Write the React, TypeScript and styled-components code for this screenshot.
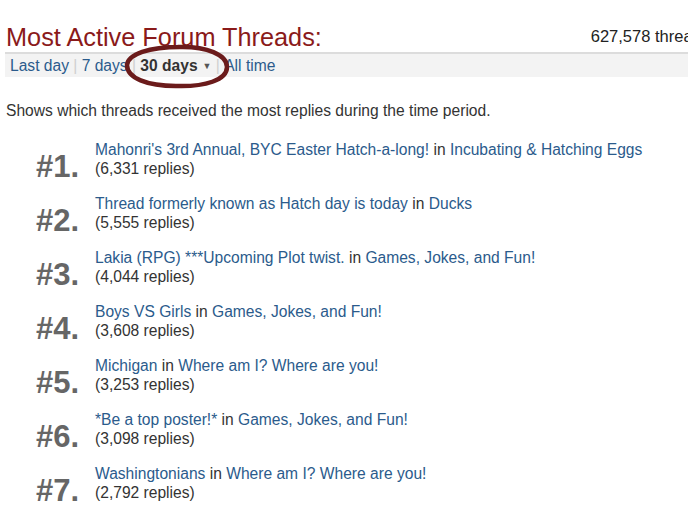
import React from "react";
import styled, { createGlobalStyle } from "styled-components";

const GlobalStyle = createGlobalStyle`
  html, body {
    margin: 0;
    padding: 0;
    background: #fff;
    overflow: hidden;
  }
  body {
    font-family: "Liberation Sans", Arial, sans-serif;
    color: #333;
  }
`;

const Page = styled.div`
  width: 705px;
  padding-left: 5px;
`;

const Header = styled.div`
  display: flex;
  justify-content: space-between;
  align-items: flex-end;
  padding: 22px 0 0 1px;
  border-bottom: 2px solid #dcdcdc;
`;

const Title = styled.h1`
  margin: 0;
  font-size: 25.3px;
  line-height: 30px;
  font-weight: normal;
  color: #8a1a1a;
`;

const Stats = styled.div`
  font-size: 16.5px;
  line-height: 20px;
  color: #222;
  padding-bottom: 6px;
  white-space: nowrap;
`;

const TabBar = styled.div`
  position: relative;
  height: 23px;
  background: #f3f3f3;
  padding-left: 5px;
  display: flex;
  align-items: center;
  font-size: 15.6px;
  white-space: pre;
`;

const TabLink = styled.a<{ $active?: boolean }>`
  color: ${(p) => (p.$active ? "#333" : "#2b5b8c")};
  font-weight: ${(p) => (p.$active ? "bold" : "normal")};
  text-decoration: none;
  cursor: pointer;
`;

const Sep = styled.span`
  color: #cfcfcf;
`;

const Caret = styled.span`
  display: inline-block;
  margin-left: 5px;
  font-size: 9px;
  color: #555;
  vertical-align: middle;
`;

const Ring = styled.svg`
  position: absolute;
  left: 119px;
  top: -10px;
  width: 106px;
  height: 45px;
  pointer-events: none;
  overflow: visible;
`;

const Intro = styled.p`
  margin: 24px 0 0 1px;
  font-size: 15.6px;
  line-height: 19px;
  color: #333;
`;

const List = styled.ol`
  list-style: none;
  margin: 20px 0 0;
  padding: 0 0 0 31px;
  display: flex;
  flex-direction: column;
  gap: 16px;
`;

const Row = styled.li`
  display: flex;
  align-items: flex-end;
`;

const Rank = styled.div`
  width: 59px;
  font-size: 31px;
  line-height: 23px;
  font-weight: bold;
  color: #666;
`;

const Body = styled.div`
  font-size: 15.6px;
  line-height: 19px;
  color: #333;
`;

const ThreadLink = styled.a`
  color: #2b5b8c;
  text-decoration: none;
  cursor: pointer;
`;

type Thread = { title: string; forum: string; replies: string };

const threads: Thread[] = [
  { title: "Mahonri's 3rd Annual, BYC Easter Hatch-a-long!", forum: "Incubating & Hatching Eggs", replies: "6,331" },
  { title: "Thread formerly known as Hatch day is today", forum: "Ducks", replies: "5,555" },
  { title: "Lakia (RPG) ***Upcoming Plot twist.", forum: "Games, Jokes, and Fun!", replies: "4,044" },
  { title: "Boys VS Girls", forum: "Games, Jokes, and Fun!", replies: "3,608" },
  { title: "Michigan", forum: "Where am I? Where are you!", replies: "3,253" },
  { title: "*Be a top poster!*", forum: "Games, Jokes, and Fun!", replies: "3,098" },
  { title: "Washingtonians", forum: "Where am I? Where are you!", replies: "2,792" },
];

export default function App() {
  return (
    <Page>
      <GlobalStyle />
      <Header>
        <Title>Most Active Forum Threads:</Title>
        <Stats>627,578 threads</Stats>
      </Header>
      <TabBar>
        <TabLink>Last day</TabLink>
        <Sep> | </Sep>
        <TabLink>7 days</TabLink>
        <Sep> | </Sep>
        <TabLink $active>
          30 days<Caret>▼</Caret>
        </TabLink>
        <Sep> | </Sep>
        <TabLink>All time</TabLink>
        <Ring viewBox="0 0 106 45">
          <path
            d="M54 3 C83 2 103 11 103 23 C103 36 81 43 52 42 C23 42 3 34 3 21 C4 10 25 3 56 3"
            fill="none"
            stroke="#6b1b1b"
            strokeWidth="4.5"
            strokeLinecap="round"
          />
        </Ring>
      </TabBar>
      <Intro>Shows which threads received the most replies during the time period.</Intro>
      <List>
        {threads.map((t, i) => (
          <Row key={t.title}>
            <Rank>#{i + 1}.</Rank>
            <Body>
              <div>
                <ThreadLink>{t.title}</ThreadLink> in <ThreadLink>{t.forum}</ThreadLink>
              </div>
              <div>({t.replies} replies)</div>
            </Body>
          </Row>
        ))}
      </List>
    </Page>
  );
}
